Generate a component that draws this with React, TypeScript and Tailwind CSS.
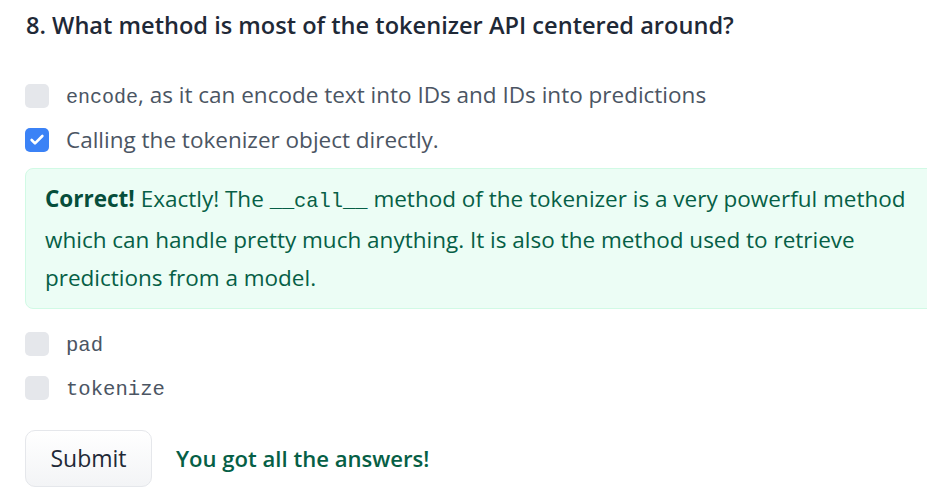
import { Check } from "lucide-react";

const sans = "font-['Open_Sans','Liberation_Sans',sans-serif]";
const mono = "font-['Liberation_Mono','DejaVu_Sans_Mono',monospace]";

interface OptionProps {
  checked?: boolean;
  children: React.ReactNode;
}

function Option({ checked, children }: OptionProps) {
  return (
    <label className="flex h-[44px] items-center">
      {checked ? (
        <span className="flex h-6 w-6 shrink-0 items-center justify-center rounded-[5px] bg-[#3b82f6]">
          <Check className="h-4 w-4 text-white" strokeWidth={4} />
        </span>
      ) : (
        <span className="h-6 w-6 shrink-0 rounded-[5px] bg-[#e5e7eb]" />
      )}
      <span className="ml-[17px] text-[22.5px] leading-[30px] text-[#4b5563]">{children}</span>
    </label>
  );
}

export default function App() {
  return (
    <div className={`h-[499px] w-[927px] overflow-hidden bg-white ${sans}`}>
      <div className="pl-[25px]">
        {/* Question */}
        <h3 className="pt-[8px] pl-px text-[23.6px] font-semibold leading-[34px] text-[#1f2937]">
          8. What method is most of the tokenizer API centered around?
        </h3>

        {/* Options */}
        <div className="mt-[32px]">
          <Option>
            <code className={`${mono} text-[20px]`}>encode</code>, as it can encode text into IDs and IDs into
            predictions
          </Option>
          <Option checked>Calling the tokenizer object directly.</Option>
        </div>

        {/* Feedback */}
        <div className="mt-[6px] w-[960px] rounded-lg border border-[#d1fae5] bg-[#ecfdf5] py-[11px] pr-[49px] pl-[19px] text-[22.5px] leading-[38px] text-[#065f46]">
          <strong className="font-bold text-[#064e3b]">Correct!</strong> Exactly! The{" "}
          <code className={`${mono} text-[20.4px]`}>__call__</code> method of the tokenizer is a very powerful method
          which can handle pretty much anything. It is also the method used to retrieve predictions from a model.
        </div>

        <div className="mt-[13px]">
          <Option>
            <code className={`${mono} text-[20.6px]`}>pad</code>
          </Option>
          <Option>
            <code className={`${mono} text-[20.6px]`}>tokenize</code>
          </Option>
        </div>

        {/* Submit */}
        <div className="mt-[20px] flex items-center">
          <button className="h-[57px] w-[127px] rounded-[10px] border border-[#e5e7eb] bg-gradient-to-b from-white to-[#f3f4f6] text-[23px] text-[#1f2937]">
            Submit
          </button>
          <span className="ml-[24px] text-[22.1px] font-semibold text-[#065f46]">You got all the answers!</span>
        </div>
      </div>
    </div>
  );
}
